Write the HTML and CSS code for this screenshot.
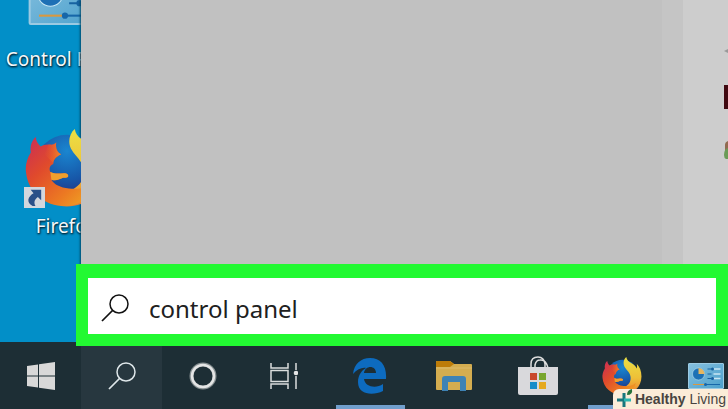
FILE: index.html
```html
<!DOCTYPE html>
<html lang="en">
<head>
<meta charset="utf-8">
<meta name="viewport" content="width=device-width, initial-scale=1">
<title>Desktop search</title>
<link rel="stylesheet" href="styles.css">
</head>
<body>
<svg class="defs" aria-hidden="true">
  <defs>
    <linearGradient id="fox" x1="0" y1="0" x2="1" y2="1">
      <stop offset="0" stop-color="#c92c58"/><stop offset=".35" stop-color="#e04a2c"/><stop offset=".7" stop-color="#ec7a22"/><stop offset="1" stop-color="#f0ae24"/>
    </linearGradient>
    <linearGradient id="flame" x1="0" y1="0" x2="0" y2="1">
      <stop offset="0" stop-color="#ebe044"/><stop offset=".55" stop-color="#eec038"/><stop offset="1" stop-color="#ea7a30"/>
    </linearGradient>
    <linearGradient id="muzzle" x1="0" y1="0" x2="1" y2="0">
      <stop offset="0" stop-color="#e8602a" stop-opacity="0"/><stop offset="1" stop-color="#f0882c"/>
    </linearGradient>
    <radialGradient id="globe" cx=".5" cy=".25" r=".75">
      <stop offset="0" stop-color="#1a86d0"/><stop offset=".6" stop-color="#1757a8"/><stop offset="1" stop-color="#262c7c"/>
    </radialGradient>
    <linearGradient id="panel" x1="0" y1="0" x2="1" y2="1">
      <stop offset="0" stop-color="#86c0df"/><stop offset="1" stop-color="#4aa0cc"/>
    </linearGradient>
    <symbol id="firefox" viewBox="0 0 84 80">
      <circle cx="43" cy="39" r="33" fill="url(#globe)"/>
      <path d="M51 0C45 5 44 14 47 20C51 28 59 32 60 42C61 52 56 58 49 62L37 79C62 82 83 65 83 41C83 29 79 20 73 14C74 18 74 21 73 24C69 13 53 13 51 0Z" fill="url(#flame)"/>
      <path d="M11 8C6 13 5 19 6 24C2 30 0 38 1 44C3 65 20 79 41 79C57 79 68 70 71 54C64 61 54 62 45 61C36 60 30 57 27 52C32 54 36 51 39 50C43 50 45 50 44 47C41 43 34 48 26 44C24 40 26 37 29 36C29 32 31 29 37 26C33 24 31 20 32 14C29 17 27 16 24 16C20 16 18 17 16 18C13 15 11 12 11 8Z" fill="url(#fox)"/>
      <path d="M32 14C29 17 27 16 24 16L20 26L29 35C29 32 31 29 37 26C33 24 31 20 32 14Z" fill="url(#muzzle)"/>
      <path d="M26 44C34 48 41 43 44 47C45 50 43 50 39 50C36 51 32 54 27 52Z" fill="#f0a02e"/>
    </symbol>
    <symbol id="control-panel" viewBox="0 0 72 52">
      <rect x="1" y="1" width="70" height="50" rx="1" fill="url(#panel)" stroke="#9bcae2" stroke-width="2"/>
      <circle cx="21" cy="22" r="12" fill="#1d70b5" stroke="#c8e8f5" stroke-width="1"/>
      <path d="M21 22V10A12 12 0 0 1 33 22Z" fill="#e6b660"/>
      <path d="M39 12H47M39 22H47M39 31H47" stroke="#1762a0" stroke-width="2"/>
      <path d="M51 12H65M51 22H65M51 31H65" stroke="#c9e6f3" stroke-width="3"/>
      <circle cx="49" cy="12" r="3" fill="#1762a0"/><circle cx="49" cy="31" r="3" fill="#1762a0"/>
      <path d="M10 43H35" stroke="#d9983f" stroke-width="2"/><path d="M35 43H64" stroke="#1767a9" stroke-width="2"/>
      <circle cx="35" cy="43" r="3" fill="#1767a9"/>
    </symbol>
    <symbol id="magnifier" viewBox="0 0 28 28">
      <circle cx="18" cy="10" r="9" fill="none" stroke="currentColor" stroke-width="1.500"/>
      <path d="M11.500 16.500L1 27" stroke="currentColor" stroke-width="1.700"/>
    </symbol>
  </defs>
</svg>

<main class="desktop">
  <div class="shortcuts">
    <a class="shortcut" href="#control-panel">
      <svg class="shortcut-icon panel-icon" aria-hidden="true"><use href="#control-panel"/></svg>
      <span>Control Panel</span>
    </a>
    <a class="shortcut" href="#firefox">
      <span class="shortcut-picture">
        <svg class="shortcut-icon fox-icon" aria-hidden="true"><use href="#firefox"/></svg>
        <svg class="link-arrow" viewBox="0 0 22 22" aria-hidden="true">
          <rect width="22" height="22" fill="#d3d7dd"/>
          <path d="M7 3H18V14L14.500 10.500C11 13 10 16 12 20H9C2 16 4 10 10 6.500Z" fill="#2a5088"/>
        </svg>
      </span>
      <span>Firefox</span>
    </a>
  </div>
  <section class="menu" aria-label="Search">
    <div class="results">
      <div class="results-list"></div>
      <div class="results-edge"></div>
      <div class="results-side">
        <svg class="side-icons" viewBox="0 0 4 120" aria-hidden="true">
          <path d="M0 4L4 2V6Z" fill="#999"/>
          <rect y="38" width="4" height="24" fill="#400810"/>
          <path d="M1 98Q1 95 4 94V104H1Z" fill="#916b50"/><path d="M0 108Q0 102 4 101V112H2Q0 111 0 108Z" fill="#6b9b57"/>
        </svg>
      </div>
    </div>
    <label class="search">
      <svg class="search-icon" aria-hidden="true"><use href="#magnifier"/></svg>
      <input class="search-input" type="text" value="control panel" aria-label="Search">
    </label>
  </section>
</main>

<nav class="taskbar" aria-label="Taskbar">
  <div class="system">
    <button class="task" aria-label="Start">
      <svg width="28" height="28" viewBox="0 0 28 28"><path d="M0 4L11 2.500V13.500H0ZM12 2.300L28 0V13.500H12ZM0 14.500H11V25.500L0 24ZM12 14.500H28V28L12 25.700Z" fill="#d8d8d8"/></svg>
    </button>
    <button class="task task-open" aria-label="Search">
      <svg width="28" height="28"><use href="#magnifier"/></svg>
    </button>
    <button class="task" aria-label="Cortana">
      <svg width="28" height="28" viewBox="0 0 28 28"><circle cx="14" cy="14" r="11.500" fill="none" stroke="#879092" stroke-width="4"/><circle cx="14" cy="14" r="11" fill="none" stroke="#e4e5e5" stroke-width="2.500"/></svg>
    </button>
    <button class="task" aria-label="Task View">
      <svg width="28" height="28" viewBox="0 0 28 28" fill="none" stroke="#dadddd" stroke-width="1.500"><path d="M1 1V6H18V1M1 27V22H18V27M1 8.500H18V19.500H1ZM26 1V8M26 14V27"/><circle cx="26" cy="11" r="2.300" fill="#e4e5e5" stroke="none"/></svg>
    </button>
  </div>
  <div class="apps">
    <button class="task running" aria-label="Edge">
      <svg width="34" height="36" viewBox="0 0 34 36"><path d="M0 16C1 6 8 0 17 0C28 0 34 8 33 21H11C12 29 23 31 30 26V33C20 38 5 37 5 24C5 17 9 12 13 10C10 9 4 11 0 16ZM11 15H23C23 7 12 7 11 15Z" fill="#0d6bbf"/></svg>
    </button>
    <button class="task" aria-label="File Explorer">
      <svg width="36" height="32" viewBox="0 0 36 32"><path d="M0 2Q0 1 1 1H14L18 4H35Q36 4 36 5V29Q36 30 35 30H1Q0 30 0 29Z" fill="#d4ad50"/><path d="M1 1H14L18 4L14 7H0V2Q0 1 1 1Z" fill="#bd7c08"/><path d="M0 8H36" stroke="#ddbb6a"/><path d="M6 31V19Q6 16 9 16H27Q30 16 30 19V31H24V22H12V31Z" fill="#3e83b5"/></svg>
    </button>
    <button class="task" aria-label="Microsoft Store">
      <svg width="40" height="40" viewBox="0 0 40 40"><path d="M13 12V8Q13 1 20 1Q26 1 27 8V12M17 12V9Q18 4 22 4Q28 3 30 12" fill="none" stroke="#dedede" stroke-width="1.500"/><path d="M0 11H40V37Q40 39 38 39H2Q0 39 0 37Z" fill="#d9d9dc"/><path d="M12 17H19V24H12Z" fill="#c9472d"/><path d="M21 17H28V24H21Z" fill="#78a62e"/><path d="M12 26H19V33H12Z" fill="#168cc9"/><path d="M21 26H28V33H21Z" fill="#e5a91f"/></svg>
    </button>
    <button class="task running" aria-label="Firefox">
      <svg width="40" height="38"><use href="#firefox"/></svg>
    </button>
    <button class="task" aria-label="Control Panel">
      <svg width="36" height="26"><use href="#control-panel"/></svg>
    </button>
  </div>
</nav>

<div class="badge">
  <svg width="18" height="20" viewBox="0 0 18 20" aria-hidden="true"><path d="M8 4V18M1 11H9" stroke="#18777d" stroke-width="3"/><path d="M8 11H15" stroke="#2bb6b0" stroke-width="3"/><path d="M11 6Q11 1 16 0Q17 6 11 6Z" fill="#26733b"/></svg>
  <span><strong>Healthy</strong> Living</span>
</div>
</body>
</html>
```
FILE: styles.css
```css
* {
  box-sizing: border-box;
}

body {
  display: flex;
  flex-direction: column;
  min-height: 100vh;
  margin: 0;
  overflow: hidden;
  background: #028fc8;
  font-family: "Noto Sans", "Open Sans", sans-serif;
}

.defs {
  position: absolute;
  width: 0;
  height: 0;
}

button {
  border: 0;
  padding: 0;
  background: none;
  color: inherit;
}

.desktop {
  display: flex;
  flex: 1;
}

.shortcuts {
  width: 81px;
  overflow: hidden;
}

.shortcut {
  display: flex;
  flex-direction: column;
  align-items: center;
  width: 132px;
  color: #f4f8fa;
  font-size: 19px;
  line-height: 28px;
  text-decoration: none;
  text-shadow: 1px 1px 2px #012b40, 0 1px 2px #012b40;
}

.shortcut-icon {
  display: block;
}

.panel-icon {
  width: 76px;
  height: 54px;
  margin-top: -29px;
  margin-bottom: 20px;
}

.shortcut-picture {
  position: relative;
  margin-top: 55px;
  margin-bottom: 4px;
}

.fox-icon {
  width: 82px;
  height: 80px;
}

.link-arrow {
  position: absolute;
  left: -1px;
  bottom: 0;
  width: 21px;
  height: 21px;
}

.menu {
  display: flex;
  flex: 1;
  flex-direction: column;
  min-width: 0;
  box-shadow: -1px 0 2px #024a68;
}

.results {
  display: flex;
  flex: 1;
  background: #c1c1c1;
}

.results-list {
  flex: 1;
}

.results-edge {
  width: 21px;
  background: #c5c5c5;
}

.results-side {
  display: flex;
  justify-content: flex-end;
  width: 45px;
  padding-top: 47px;
  background: #cdcdcd;
}

.side-icons {
  width: 4px;
  height: 120px;
}

.search {
  z-index: 1;
  display: flex;
  align-items: center;
  gap: 20px;
  height: 82px;
  margin: 0 0 -4px -5px;
  border: 12px solid #22f932;
  border-top-width: 14px;
  padding: 4px 13px 0;
  background: #fff;
  color: #111;
}

.search-icon {
  width: 28px;
  height: 28px;
}

.search-input {
  flex: 1;
  min-width: 0;
  border: 0;
  padding: 2px 0 0;
  outline: 0;
  background: none;
  color: #202020;
  font: 24px/36px "Noto Sans", "Open Sans", sans-serif;
}

.taskbar {
  display: flex;
  gap: 4px;
  height: 67px;
  background: #1d2e35;
  color: #dfe7ea;
}

.system,
.apps {
  display: flex;
}

.task {
  display: flex;
  align-items: center;
  justify-content: center;
  width: 81px;
  height: 67px;
}

.apps .task {
  flex: none;
  width: 84px;
}

.task-open {
  background: #27373f;
}

.running {
  background: linear-gradient(#719fcd, #719fcd) center bottom / 69px 4px no-repeat;
}

.badge {
  position: absolute;
  right: 0;
  bottom: 0;
  z-index: 2;
  display: flex;
  align-items: center;
  gap: 1px;
  height: 20px;
  border-top-left-radius: 6px;
  padding: 0 2px 0 3px;
  background: #fbecd8;
  color: #484440;
  font: 14px/20px "Liberation Sans", sans-serif;
}
```
